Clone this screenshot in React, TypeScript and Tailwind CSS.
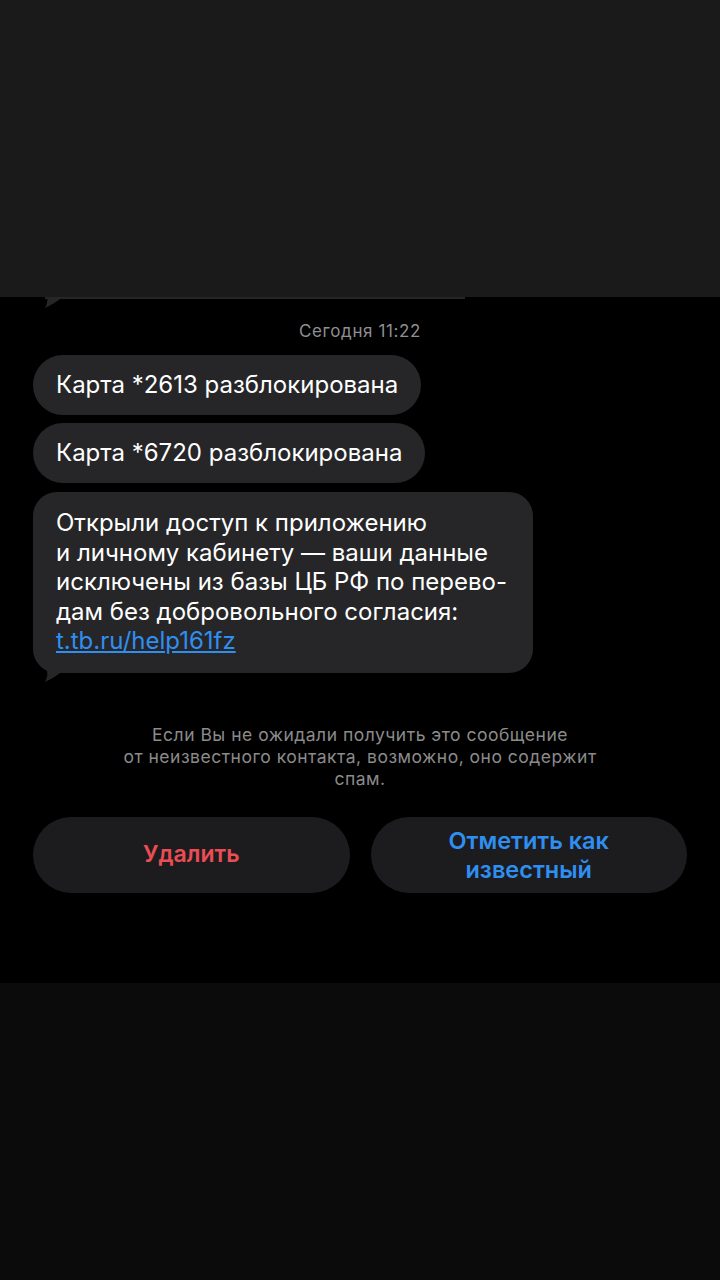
export default function App() {
  const font = { fontFamily: "Inter, 'Noto Sans', sans-serif" }

  return (
    <div className="flex flex-col h-[1280px] w-[720px] bg-black" style={font}>
      <div className="h-[297px] bg-[#1a1a1a]" />

      <main className="relative h-[686px] bg-black">
        {/* bottom edge of the previous bubble, cut by the overlay */}
        <div className="ml-[45px] h-[2px] w-[420px] bg-[#262628]" />
        <svg className="absolute left-[43px] top-0" width="22" height="13" viewBox="0 0 22 13">
          <path d="M4 0 H20 C14 4 9 8 2 11 C4 7 5 3 4 0 Z" fill="#262628" />
        </svg>

        <p className="mt-[22px] text-center text-[17px] leading-[20px] tracking-[0.6px] text-[#8e8e93]">Сегодня 11:22</p>

        <div className="mt-[14px] flex flex-col items-start gap-[8px] pl-[33px]">
          <div className="rounded-[30px] bg-[#262628] px-[23px] py-[15px] text-[24px] leading-[30px] text-white">
            Карта *2613 разблокирована
          </div>
          <div className="rounded-[30px] bg-[#262628] px-[23px] py-[15px] text-[24px] leading-[30px] text-white">
            Карта *6720 разблокирована
          </div>
          <div className="relative mt-[1px] w-[500px] rounded-[24px] bg-[#262628] pb-[17px] pl-[23px] pr-[20px] pt-[16px] text-[24px] leading-[29.5px] text-white">
            Открыли доступ к приложению
            <br />и личному кабинету — ваши данные
            <br />
            исключены из базы ЦБ РФ по перево-
            <br />
            дам без добровольного согласия:
            <br />
            <a className="text-[#2f8ff0] underline underline-offset-2">t.tb.ru/help161fz</a>
            <svg className="absolute -bottom-[11px] left-[10px]" width="22" height="13" viewBox="0 0 22 13">
              <path d="M4 0 H20 C14 4 9 8 2 11 C4 7 5 3 4 0 Z" fill="#262628" />
            </svg>
          </div>
        </div>

        <p className="mt-[51px] text-center text-[17.5px] leading-[22px] tracking-[0.5px] text-[#8b8b8b]">
          Если Вы не ожидали получить это сообщение
          <br />
          от неизвестного контакта, возможно, оно содержит
          <br />
          спам.
        </p>

        <div className="mt-[27px] grid grid-cols-2 gap-[21px] px-[33px]">
          <button className="flex h-[76px] items-center justify-center rounded-full bg-[#1c1c1e] text-[23px] font-semibold leading-[29px] text-[#eb4d55]">
            Удалить
          </button>
          <button className="flex h-[76px] items-center justify-center rounded-full bg-[#1c1c1e] text-center text-[23.5px] font-semibold leading-[29px] text-[#2f8ff0]">
            Отметить как
            <br />
            известный
          </button>
        </div>
      </main>

      <div className="flex-1 bg-[#0b0b0b]" />
    </div>
  )
}
